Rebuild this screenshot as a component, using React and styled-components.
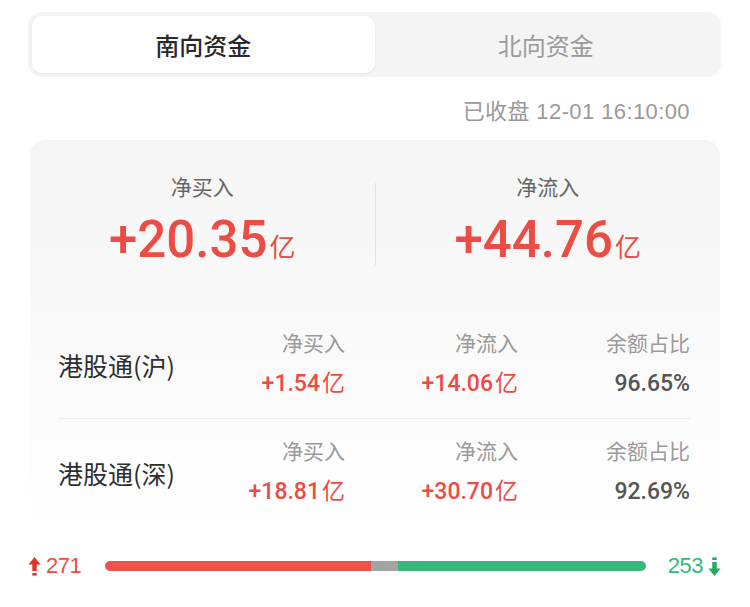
import React from 'react';
import styled, { createGlobalStyle } from 'styled-components';

const GlobalStyle = createGlobalStyle`
  html, body {
    margin: 0;
    padding: 0;
    background: #fff;
    font-family: Roboto, "Noto Sans CJK SC", sans-serif;
  }
`;

const RED = '#ec4c44';
const GREEN = '#36b87a';

const Page = styled.div`
  width: 750px;
  height: 607px;
  box-sizing: border-box;
  padding: 12px 29px 0 28px;
`;

const TabBar = styled.div`
  display: flex;
  height: 65px;
  box-sizing: border-box;
  padding: 4px;
  background: #f4f4f4;
  border-radius: 14px;
`;

const Tab = styled.div`
  flex: 1;
  display: flex;
  align-items: center;
  justify-content: center;
  border-radius: 10px;
  font-family: "Noto Sans CJK SC", sans-serif;
  font-size: 24px;
  font-weight: ${p => (p.$active ? 500 : 400)};
  color: ${p => (p.$active ? '#2a2a2a' : '#9a9a9a')};
  background: ${p => (p.$active ? '#fff' : 'transparent')};
  box-shadow: ${p => (p.$active ? '0 1px 3px rgba(0,0,0,0.06)' : 'none')};
`;

const Stamp = styled.div`
  margin: 21px 31px 0 0;
  text-align: right;
  font-family: "Liberation Sans", "Noto Sans CJK SC", sans-serif;
  font-size: 22px;
  line-height: 28px;
  color: #999;
  letter-spacing: 0.4px;
`;

const Card = styled.div`
  margin: 14px 1px 0 2px;
  border-radius: 16px;
  background: linear-gradient(180deg, #f5f5f5 0%, #f9f9f9 50%, #ffffff 100%);
  padding: 31px 30px 0 28px;
`;

const Summary = styled.div`
  display: flex;
  align-items: center;
  margin: 0 -30px 0 -28px;
`;

const SummaryCell = styled.div`
  flex: 1;
  display: flex;
  flex-direction: column;
  align-items: center;
`;

const Divider = styled.div`
  width: 1px;
  height: 82px;
  background: #e2e2e2;
  margin-top: 8px;
`;

const SumLabel = styled.div`
  font-family: "Noto Sans CJK SC", sans-serif;
  font-size: 21px;
  line-height: 30px;
  color: #666;
`;

const SumValue = styled.div`
  margin-top: 11px;
  height: 56px;
  font-family: Roboto, sans-serif;
  font-weight: 500;
  font-size: 51px;
  line-height: 56px;
  color: ${RED};
  display: flex;
  align-items: baseline;
`;

const Unit = styled.span`
  font-family: "Noto Sans CJK SC", sans-serif;
  font-weight: 400;
  font-size: ${p => p.$size || 26}px;
  line-height: 1;
  margin-left: 2px;
`;

const Rows = styled.div`
  margin-top: 43px;
`;

const Row = styled.div`
  display: grid;
  grid-template-columns: minmax(0, 1fr) 173px 173px 172px;
  align-items: center;
  padding: 16px 0 19px;
  border-bottom: ${p => (p.$last ? 'none' : '1px solid #ececec')};
`;

const Name = styled.div`
  font-family: "Noto Sans CJK SC", sans-serif;
  font-size: 25px;
  line-height: 36px;
  color: #2e2e2e;
  white-space: nowrap;
  margin-top: 4px;
`;

const Col = styled.div`
  display: flex;
  flex-direction: column;
  align-items: flex-end;
  gap: 12px;
`;

const ColLabel = styled.div`
  font-family: "Noto Sans CJK SC", sans-serif;
  font-size: 21px;
  line-height: 30px;
  color: #9a9a9a;
`;

const ColValue = styled.div`
  height: 30px;
  font-family: Roboto, sans-serif;
  font-weight: 500;
  font-size: 23px;
  line-height: 30px;
  color: ${p => (p.$muted ? '#555' : RED)};
  display: flex;
  align-items: baseline;
`;

const Breadth = styled.div`
  display: flex;
  align-items: center;
  margin-top: 28px;
  height: 24px;
`;

const Count = styled.div`
  display: flex;
  align-items: center;
  gap: 5px;
  font-family: "Liberation Sans", sans-serif;
  font-size: 22px;
  letter-spacing: -0.5px;
  color: ${p => p.$color};
`;

const Bar = styled.div`
  flex: 1;
  display: flex;
  height: 10px;
  border-radius: 5px;
  overflow: hidden;
  margin: 0 22px 0 24px;
`;

const Seg = styled.div`
  flex: ${p => p.$weight} 1 0;
  background: ${p => p.$color};
`;

const UpArrow = () => (
  <svg width="13" height="21" viewBox="0 0 13 21">
    <path d="M6.5 1 L12.5 8.5 H8.7 V15 H4.3 V8.5 H0.5 Z" fill="#e8322c" />
    <rect x="4.3" y="17" width="4.4" height="2.6" fill="#e8322c" />
  </svg>
);

const DownArrow = () => (
  <svg width="13" height="21" viewBox="0 0 13 21">
    <rect x="4.3" y="1.4" width="4.4" height="2.6" fill="#27a862" />
    <path d="M6.5 20 L12.5 12.5 H8.7 V6 H4.3 V12.5 H0.5 Z" fill="#27a862" />
  </svg>
);

const rows = [
  { name: '港股通(沪)', buy: '+1.54', flow: '+14.06', ratio: '96.65%' },
  { name: '港股通(深)', buy: '+18.81', flow: '+30.70', ratio: '92.69%' },
];

const App = () => (
  <Page>
    <GlobalStyle />
    <TabBar>
      <Tab $active>南向资金</Tab>
      <Tab>北向资金</Tab>
    </TabBar>
    <Stamp>已收盘 12-01 16:10:00</Stamp>
    <Card>
      <Summary>
        <SummaryCell>
          <SumLabel>净买入</SumLabel>
          <SumValue>+20.35<Unit>亿</Unit></SumValue>
        </SummaryCell>
        <Divider />
        <SummaryCell>
          <SumLabel>净流入</SumLabel>
          <SumValue>+44.76<Unit>亿</Unit></SumValue>
        </SummaryCell>
      </Summary>
      <Rows>
        {rows.map((r, i) => (
          <Row key={r.name} $last={i === rows.length - 1}>
            <Name>{r.name}</Name>
            <Col>
              <ColLabel>净买入</ColLabel>
              <ColValue>{r.buy}<Unit $size={23}>亿</Unit></ColValue>
            </Col>
            <Col>
              <ColLabel>净流入</ColLabel>
              <ColValue>{r.flow}<Unit $size={23}>亿</Unit></ColValue>
            </Col>
            <Col>
              <ColLabel>余额占比</ColLabel>
              <ColValue $muted>{r.ratio}</ColValue>
            </Col>
          </Row>
        ))}
      </Rows>
    </Card>
    <Breadth>
      <Count $color={RED}>
        <UpArrow />
        271
      </Count>
      <Bar>
        <Seg $weight={271} $color="#f0514a" />
        <Seg $weight={27} $color="#a3a3a3" />
        <Seg $weight={253} $color="#38b97c" />
      </Bar>
      <Count $color={GREEN}>
        253
        <DownArrow />
      </Count>
    </Breadth>
  </Page>
);

export default App;
